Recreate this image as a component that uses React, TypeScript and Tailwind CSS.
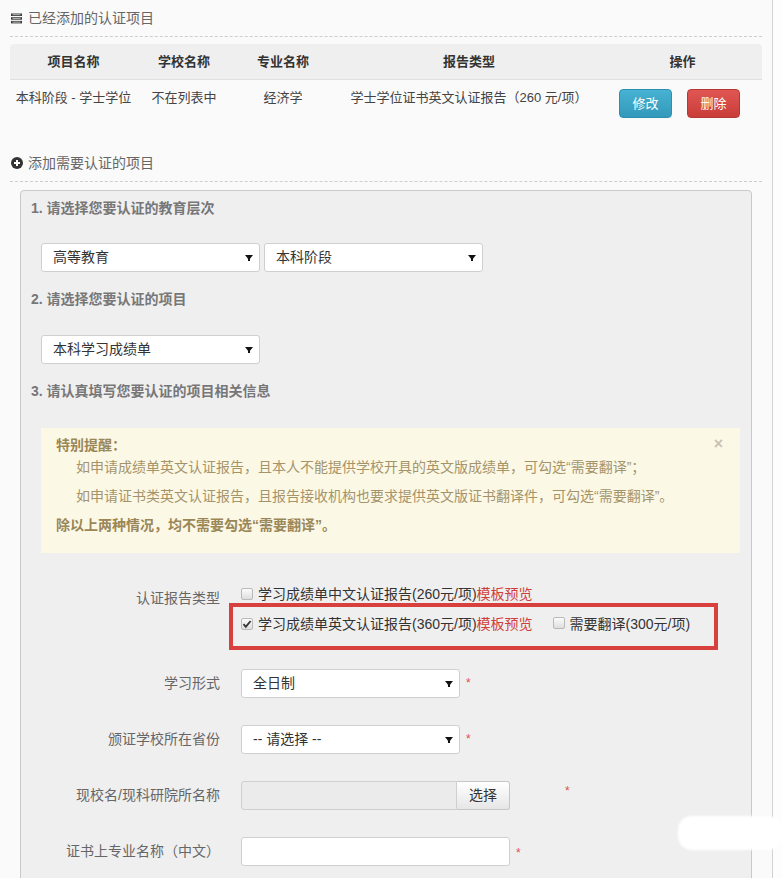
import React from "react";

// small drawn glyphs used on the page
function ListIcon() {
  return (
    <svg width="11" height="11" viewBox="0 0 11 11" className="shrink-0">
      <rect x="0" y="0.5" width="11" height="2.5" fill="#3a3a3a" />
      <rect x="0" y="4.2" width="11" height="2.5" fill="#3a3a3a" />
      <rect x="0" y="7.9" width="11" height="2.5" fill="#3a3a3a" />
      <rect x="1.5" y="1.2" width="8" height="1" fill="#bbb" />
      <rect x="1.5" y="4.9" width="8" height="1" fill="#bbb" />
      <rect x="1.5" y="8.6" width="8" height="1" fill="#bbb" />
    </svg>
  );
}

function PlusSign() {
  return (
    <svg width="12" height="12" viewBox="0 0 12 12" className="shrink-0">
      <circle cx="6" cy="6" r="6" fill="#333" />
      <path d="M6 3v6M3 6h6" stroke="#fff" strokeWidth="2" />
    </svg>
  );
}

function Caret() {
  return (
    <svg width="8" height="8" viewBox="0 0 8 8" className="shrink-0">
      <path d="M0 1h8L4 6z" fill="#111" />
      <rect x="3" y="5" width="2" height="2" fill="#111" />
    </svg>
  );
}

function Box({ checked }: { checked?: boolean }) {
  return (
    <span className="inline-flex h-[12px] w-[12px] shrink-0 items-center justify-center rounded-[2px] border border-[#b9b9b9] bg-linear-to-b from-[#fbfbfb] to-[#dedede]">
      {checked && (
        <svg width="10" height="10" viewBox="0 0 10 10">
          <path d="M1.5 5.2l2.3 2.6L8.6 2" stroke="#333" strokeWidth="1.8" fill="none" />
        </svg>
      )}
    </span>
  );
}

function Select({ value, className }: { value: string; className: string }) {
  return (
    <div
      className={
        "flex h-[29px] items-center justify-between rounded-[3px] border border-[#cfcfcf] bg-white pl-[11px] pr-[6px] text-[14px] text-[#333] " +
        className
      }
    >
      <span>{value}</span>
      <Caret />
    </div>
  );
}

function Star({ className }: { className: string }) {
  return <span className={"text-[12px] leading-none text-[#d9534f] " + className}>*</span>;
}

const cols = "grid grid-cols-[127px_94px_104px_268px_159px] text-center";

export default function App() {
  return (
    <div className="relative flex h-[878px] w-[782px] overflow-hidden bg-[#fdfdfd] font-['Liberation_Sans','Noto_Sans_CJK_SC',sans-serif] text-[13px]">
      <div className="w-[773px] shrink-0 border-r border-[#d2d2d2] bg-[#fafafa] px-[10px]">
        {/* added items */}
        <div className="mt-[8px] flex h-[20px] items-center gap-[6px] pl-[1px] text-[14px] text-[#666]">
          <ListIcon />
          <span>已经添加的认证项目</span>
        </div>
        <div className="mt-[8px] border-t border-dashed border-[#cdcdcd]" />

        <div className={cols + " mt-[7px] h-[36px] items-center rounded-t-[4px] border-b border-[#e0e0e0] bg-[#efefef] font-bold text-[#333]"}>
          <div>项目名称</div>
          <div>学校名称</div>
          <div>专业名称</div>
          <div>报告类型</div>
          <div>操作</div>
        </div>
        <div className={cols + " h-[50px] leading-[20px] text-[#444]"}>
          <div className="pt-[8px]">本科阶段 - 学士学位</div>
          <div className="pt-[8px]">不在列表中</div>
          <div className="pt-[8px]">经济学</div>
          <div className="pt-[8px]">学士学位证书英文认证报告（260 元/项）</div>
          <div className="flex gap-[15px] pl-[16px] pt-[9px]">
            <button className="h-[29px] w-[53px] rounded-[4px] border border-[#2c8fae] bg-linear-to-b from-[#47b2d3] to-[#3399ba] text-[13px] text-white">
              修改
            </button>
            <button className="h-[29px] w-[53px] rounded-[4px] border border-[#b53834] bg-linear-to-b from-[#e05652] to-[#c93d39] text-[13px] text-white">
              删除
            </button>
          </div>
        </div>

        {/* add new item */}
        <div className="mt-[23px] flex h-[20px] items-center gap-[5px] pl-[1px] text-[14px] text-[#666]">
          <PlusSign />
          <span>添加需要认证的项目</span>
        </div>
        <div className="mt-[8px] border-t border-dashed border-[#cdcdcd]" />

        <div className="mx-[10px] mt-[8px] h-[720px] rounded-[4px] border border-[#c9c9c9] bg-[#f0eff0]">
          <div className="px-[10px] pt-[7px]">
            <div className="h-[20px] text-[14px] leading-[20px] font-bold text-[#777]">1. 请选择您要认证的教育层次</div>
            <div className="mt-[25px] flex gap-[4px] pl-[10px]">
              <Select value="高等教育" className="w-[219px]" />
              <Select value="本科阶段" className="w-[219px]" />
            </div>
            <div className="mt-[17px] h-[20px] text-[14px] leading-[20px] font-bold text-[#777]">2. 请选择您要认证的项目</div>
            <div className="mt-[26px] pl-[10px]">
              <Select value="本科学习成绩单" className="w-[219px]" />
            </div>
            <div className="mt-[17px] h-[20px] text-[14px] leading-[20px] font-bold text-[#777]">3. 请认真填写您要认证的项目相关信息</div>

            <div className="ml-[10px] mt-[27px] flex h-[125px] w-[699px] bg-[#fcf8e6] pl-[15px] pr-[17px] pt-[6px] text-[14px] leading-[22px] text-[#a5946a]">
              <div className="flex-1">
                <div className="font-bold text-[#9a8757]">特别提醒：</div>
                <div className="pl-[20px]">如申请成绩单英文认证报告，且本人不能提供学校开具的英文版成绩单，可勾选“需要翻译”；</div>
                <div className="mt-[7px] pl-[20px]">如申请证书类英文认证报告，且报告接收机构也要求提供英文版证书翻译件，可勾选“需要翻译”。</div>
                <div className="mt-[7px] font-bold text-[#9a8757]">除以上两种情况，均不需要勾选“需要翻译”。</div>
              </div>
              <span className="text-[16px] leading-[20px] font-bold text-[#c8c2b4]">×</span>
            </div>
          </div>

          {/* form rows */}
          <div className="mt-[31px] flex text-[14px]">
            <div className="w-[199px] pt-[4px] text-right leading-[20px] text-[#666]">认证报告类型</div>
            <div className="ml-[21px] text-[#333]">
              <div className="flex h-[20px] items-center">
                <Box />
                <span className="ml-[5px]">学习成绩单中文认证报告(260元/项)</span>
                <span className="text-[#cf3e3a]">模板预览</span>
              </div>
              <div className="-ml-[12px] -mt-[1px] h-[47px] w-[489px] border-[4px] border-[#d8403d] pl-[8px] pt-[7px]">
                <div className="flex h-[20px] items-center">
                  <Box checked />
                  <span className="ml-[5px]">学习成绩单英文认证报告(360元/项)</span>
                  <span className="text-[#cf3e3a]">模板预览</span>
                  <span className="ml-[20px]">
                    <Box />
                  </span>
                  <span className="ml-[5px]">需要翻译(300元/项)</span>
                </div>
              </div>
            </div>
          </div>

          <div className="mt-[19px] flex h-[29px] items-center text-[14px]">
            <div className="w-[199px] text-right text-[#666]">学习形式</div>
            <Select value="全日制" className="ml-[21px] w-[219px]" />
            <Star className="ml-[6px] self-start pt-[8px]" />
          </div>

          <div className="mt-[27px] flex h-[29px] items-center text-[14px]">
            <div className="w-[199px] text-right text-[#666]">颁证学校所在省份</div>
            <Select value="-- 请选择 --" className="ml-[21px] w-[219px]" />
            <Star className="ml-[6px] self-start pt-[8px]" />
          </div>

          <div className="mt-[27px] flex h-[29px] items-center text-[14px]">
            <div className="w-[199px] text-right text-[#666]">现校名/现科研院所名称</div>
            <div className="ml-[21px] h-[29px] w-[216px] rounded-l-[3px] border border-[#cfcfcf] bg-[#ebebeb]" />
            <button className="h-[29px] w-[53px] rounded-r-[3px] border border-l-0 border-[#c6c6c6] bg-linear-to-b from-[#ffffff] to-[#e6e6e6] text-[14px] text-[#333]">
              选择
            </button>
            <Star className="ml-[55px] self-start pt-[4px]" />
          </div>

          <div className="mt-[27px] flex h-[29px] items-center text-[14px]">
            <div className="w-[199px] text-right text-[#666]">证书上专业名称（中文）</div>
            <div className="ml-[21px] h-[29px] w-[269px] rounded-[3px] border border-[#cfcfcf] bg-white" />
            <Star className="ml-[6px] self-start pt-[10px]" />
          </div>
        </div>
      </div>

      {/* watermark smudge over the corner */}
      <div className="absolute left-[678px] top-[816px] h-[34px] w-[104px] rounded-[14px] bg-white blur-[1px]" />
    </div>
  );
}
